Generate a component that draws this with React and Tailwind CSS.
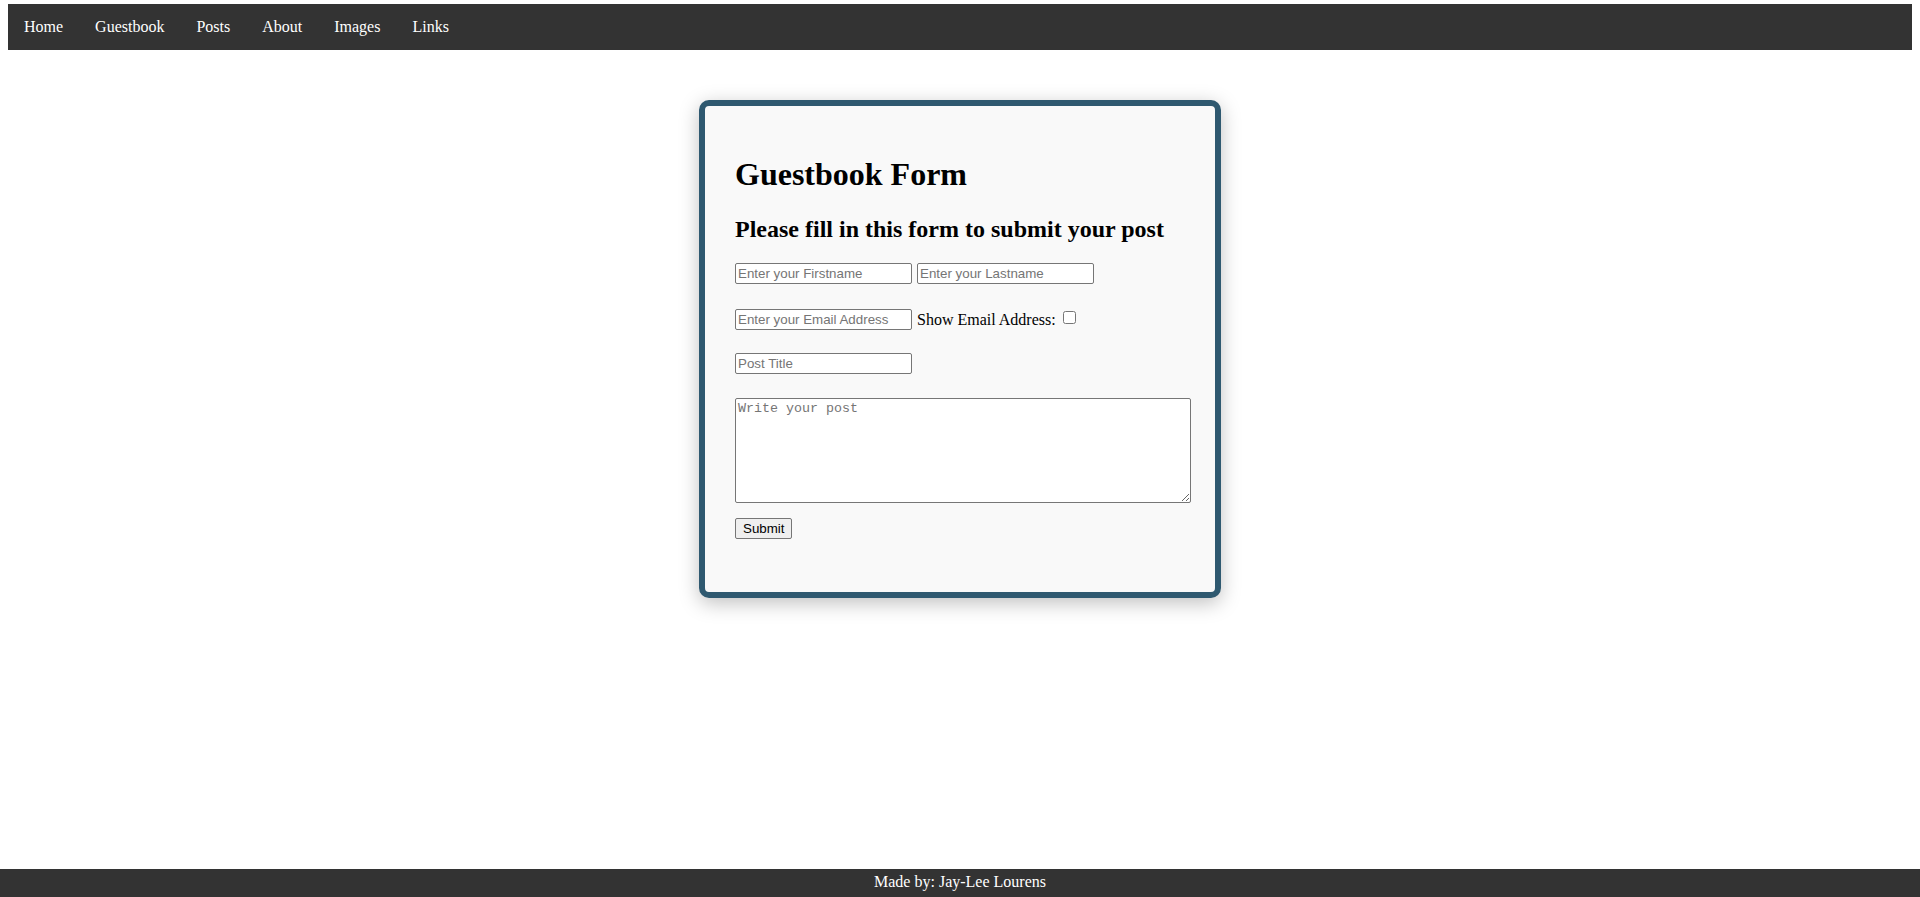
import React from 'react';

const links = ['Home', 'Guestbook', 'Posts', 'About', 'Images', 'Links'];

const inputCls =
    "w-[177px] h-[21px] px-[2px] py-[1px] bg-white border border-[#767676] rounded-[2px] text-[13.33px] font-['Liberation_Sans',Arial,sans-serif] text-black placeholder:text-[#757575] outline-none";

const App = () => {
    return (
        <div className="min-h-screen flex flex-col bg-white text-black font-['Liberation_Serif','Times_New_Roman',serif]">
            <nav className="mx-2 mt-1 bg-[#333333] flex">
                {links.map((l) => (
                    <a key={l} href="#" className="px-4 py-[14px] text-[16px] leading-[18px] text-white">
                        {l}
                    </a>
                ))}
            </nav>

            <main className="flex-1">
                <div className="mx-auto mt-[50px] w-[522px] bg-[#f9f9f9] border-[6px] border-[#2f5970] rounded-[10px] shadow-[0_5px_20px_rgba(0,0,0,0.25)] pl-[30px] pr-[24px] pt-[30px] pb-[53px]">
                    <h1 className="mt-[20px] text-[32px] leading-[37px] font-bold">Guestbook Form</h1>
                    <h2 className="mt-[22px] text-[24px] leading-[28px] font-bold">Please fill in this form to submit your post</h2>

                    <form onSubmit={(e) => e.preventDefault()}>
                        <div className="mt-[20px] flex items-center">
                            <input type="text" placeholder="Enter your Firstname" className={inputCls} />
                            <input type="text" placeholder="Enter your Lastname" className={inputCls + ' ml-[5px]'} />
                        </div>

                        <div className="mt-[25px] flex items-center">
                            <input type="email" placeholder="Enter your Email Address" className={inputCls} />
                            <span className="ml-[5px] text-[16px] leading-[18px]">Show Email Address:</span>
                            <input type="checkbox" className="ml-[7px] mb-[4px] w-[13px] h-[13px]" />
                        </div>

                        <div className="mt-[23px] flex">
                            <input type="text" placeholder="Post Title" className={inputCls} />
                        </div>

                        <textarea
                            placeholder="Write your post"
                            className="block mt-[24px] w-[456px] h-[105px] p-[2px] bg-white border border-[#767676] rounded-[2px] text-[13.33px] leading-[16px] font-['Liberation_Mono','DejaVu_Sans_Mono',monospace] placeholder:text-[#757575] outline-none"
                        />

                        <button
                            type="submit"
                            className="block mt-[15px] h-[21px] px-[7px] bg-[#efefef] border border-[#767676] rounded-[2px] text-[13.33px] leading-[15px] font-['Liberation_Sans',Arial,sans-serif] text-black"
                        >
                            Submit
                        </button>
                    </form>
                </div>
            </main>

            <footer className="bg-[#333333] text-white text-center text-[16px] leading-[18px] pt-[4px] pb-[6px]">
                Made by: Jay-Lee Lourens
            </footer>
        </div>
    );
};

export default App;
